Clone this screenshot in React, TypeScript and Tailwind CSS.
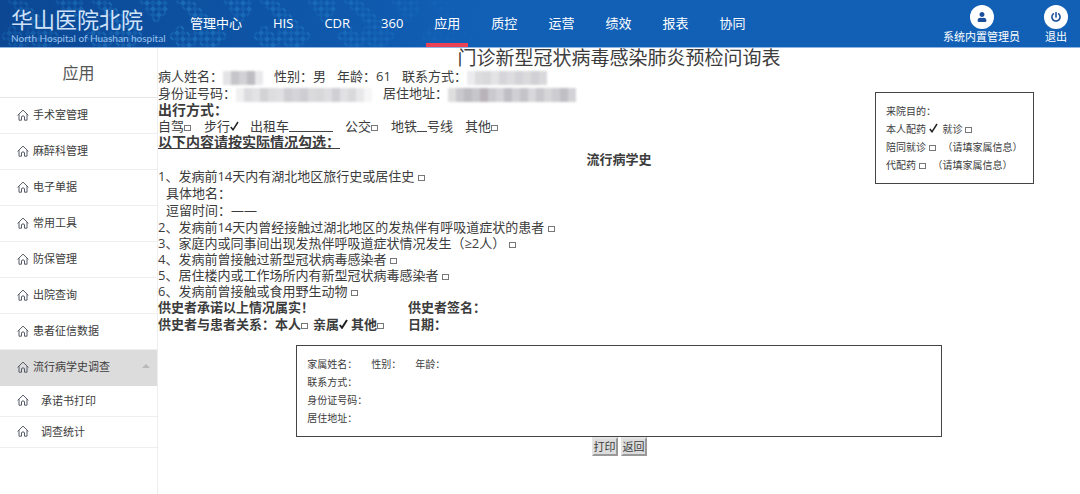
import React from 'react';
import { FaPowerOff, FaUser } from 'react-icons/fa';

interface MenuItem {
  id: string;
  label: string;
  active?: boolean;
}

interface TickProps {
  label: string;
  checked?: boolean;
  bold?: boolean;
  className?: string;
}

const navItems = ['管理中心', 'HIS', 'CDR', '360', '应用', '质控', '运营', '绩效', '报表', '协同'];

const menuItems: MenuItem[] = [
  { id: 'surgery', label: '手术室管理' },
  { id: 'anesthesia', label: '麻醉科管理' },
  { id: 'receipts', label: '电子单据' },
  { id: 'tools', label: '常用工具' },
  { id: 'prevention', label: '防保管理' },
  { id: 'discharge', label: '出院查询' },
  { id: 'credit', label: '患者征信数据' },
  { id: 'epidemic', label: '流行病学史调查', active: true },
];

const subItems: MenuItem[] = [
  { id: 'commitment', label: '承诺书打印' },
  { id: 'stats', label: '调查统计' },
];

const questions = [
  '2、发病前14天内曾经接触过湖北地区的发热伴有呼吸道症状的患者',
  '3、家庭内或同事间出现发热伴呼吸道症状情况发生（≥2人）',
  '4、发病前曾接触过新型冠状病毒感染者',
  '5、居住楼内或工作场所内有新型冠状病毒感染者',
  '6、发病前曾接触或食用野生动物',
];

// grey levels of the masked personal data, one entry per 8px block
const masks = {
  name: ['#e4e4e6', '#c6c6ca', '#d2d2d5', '#bdbdc2', '#e9e9eb'],
  phone: ['#ececee', '#dcdcdf', '#d9d9dc', '#e3e3e6', '#d6d6da', '#dddde0', '#d4d4d8', '#dadadd', '#d0d0d5', '#d9d9dc'],
  idCard: ['#f0f0f1', '#dcdcdf', '#e3e3e5', '#d3d3d6', '#dddde0', '#e0e0e2', '#cfcfd3', '#d5d5d9', '#cdcdd2', '#dadadd', '#d7d7da', '#dedee1', '#cfcfd4', '#e1e1e4', '#d9d9dc', '#e8e8ea', '#f6f6f7'],
  address: ['#dededf', '#c9c9cd', '#bcbcc1', '#c6c6cb', '#b9b2b8', '#cacace', '#d4d4d8', '#bebec4', '#d0d0d4', '#c4c4c9', '#d8d8db', '#c7c7cc', '#d6d6d9', '#cdcdd1', '#bfbfc5', '#d3d3d6'],
};

const Mask: React.FC<{ shades: string[] }> = ({ shades }) => (
  <span className="inline-flex h-[14px] align-middle blur-[1px]">
    {shades.map((shade, i) => (
      <span key={i} className="w-2" style={{ backgroundColor: shade }} />
    ))}
  </span>
);

const Tick: React.FC<TickProps> = ({ label, checked, bold, className = '' }) => (
  <label className={className}>
    {label}
    <span className="inline-grid h-2 w-2 items-end">
      <input
        type="checkbox"
        defaultChecked={checked}
        className="peer col-start-1 row-start-1 h-[6px] w-[7px] appearance-none border border-[#777] checked:border-transparent"
      />
      <svg
        viewBox="0 0 9 10"
        className="pointer-events-none invisible col-start-1 row-start-1 h-[10px] w-[9px] peer-checked:visible"
      >
        <path
          d="M0.8 6 L3 8.8 L8 1"
          fill="none"
          stroke="#222"
          strokeWidth={bold ? 2 : 1.5}
        />
      </svg>
    </span>
  </label>
);

const HomeIcon = () => (
  <svg viewBox="0 0 12 12" className="mb-[2px] h-3 w-3 shrink-0" fill="none" stroke="#555b66" strokeWidth="1">
    <path d="M0.6 6.4 L6 1.1 L11.4 6.4" />
    <path d="M2 5.2 V11.2 H4.5 V8 Q4.5 6.9 6 6.9 Q7.5 6.9 7.5 8 V11.2 H10 V5.2" />
  </svg>
);

const HeaderPattern = () => (
  <svg className="absolute inset-y-0 left-0 h-full w-[480px]" aria-hidden="true">
    <defs>
      <pattern id="diamonds" width="12" height="12" patternUnits="userSpaceOnUse">
        <path d="M3 0 L6 3 L3 6 L0 3 Z M9 6 L12 9 L9 12 L6 9 Z" fill="#2f95dc" />
        <path d="M9 0 L12 3 L9 6 L6 3 Z M3 6 L6 9 L3 12 L0 9 Z" fill="#2f95dc" opacity="0.6" />
      </pattern>
      <pattern id="clusters" width="84" height="60" patternUnits="userSpaceOnUse">
        <path d="M6 0 L24 0 L60 36 L42 54 L30 42 L18 54 L0 36 L12 24 L24 36 L30 24 Z" fill="#fff" />
        <path d="M54 0 L84 0 L84 12 L72 24 Z" fill="#fff" />
      </pattern>
      <linearGradient id="fade">
        <stop offset="0" stopColor="#fff" stopOpacity="0.25" />
        <stop offset="0.3" stopColor="#fff" stopOpacity="0.4" />
        <stop offset="0.7" stopColor="#fff" stopOpacity="0.3" />
        <stop offset="1" stopColor="#fff" stopOpacity="0" />
      </linearGradient>
      <mask id="cluster-mask">
        <rect width="480" height="60" fill="url(#clusters)" />
      </mask>
      <mask id="fade-mask">
        <rect width="480" height="60" fill="url(#fade)" />
      </mask>
    </defs>
    <g mask="url(#fade-mask)">
      <rect width="480" height="60" fill="url(#diamonds)" mask="url(#cluster-mask)" />
    </g>
  </svg>
);

const Header = () => (
  <header className="relative flex h-12 border-b border-[#8fb5e3] bg-gradient-to-r from-[#0b4793] via-[#1160b6] via-45% to-[#1160b6] text-white">
    <HeaderPattern />
    <div className="relative w-[182px] shrink-0 pt-[7px] pl-[11px] text-[#cfe2f8]">
      <div className="text-[22px] leading-6">华山医院北院</div>
      <div className="font-['Lato',sans-serif] text-[10px] leading-[14px] whitespace-nowrap text-[#9cc3ee]">
        North Hospital of Huashan hospital
      </div>
    </div>
    <nav className="relative flex gap-[15px]">
      {navItems.map((item) => (
        <a
          key={item}
          href="#"
          className={`flex items-center border-b-4 px-2 pt-[5px] text-[13px] whitespace-nowrap ${
            item === '应用' ? 'border-[#ea4254]' : 'border-transparent'
          }`}
        >
          {item}
        </a>
      ))}
    </nav>
    <div className="relative ml-auto flex gap-6 pt-[5px] pr-3 text-[11px] leading-4">
      <a href="#" className="flex flex-col items-center">
        <span className="flex h-6 w-6 items-center justify-center rounded-full bg-white text-[#1b4f9c]">
          <FaUser className="h-[10px] w-[10px]" />
        </span>
        系统内置管理员
      </a>
      <a href="#" className="flex flex-col items-center">
        <span className="flex h-6 w-6 items-center justify-center rounded-full bg-white text-[#1b4f9c]">
          <FaPowerOff className="h-[10px] w-[10px]" />
        </span>
        退出
      </a>
    </div>
  </header>
);

const Sidebar = () => (
  <aside className="w-[158px] shrink-0 border-r border-[#eee] text-[11px]">
    <h2 className="flex h-[50px] items-center justify-center border-b border-[#e6e6e6] text-base text-[#555]">应用</h2>
    <ul>
      {menuItems.map((item) => (
        <li key={item.id}>
          <a
            href="#"
            className={`flex h-9 items-center gap-1 border-b px-[17px] ${
              item.active ? 'border-[#dcdcdc] bg-[#dcdcdc]' : 'border-[#eee]'
            }`}
          >
            <HomeIcon />
            {item.label}
            {item.active && (
              <svg viewBox="0 0 8 4" className="-mr-[10px] mb-1 ml-auto h-1 w-2">
                <path d="M0 4 L4 0 L8 4 Z" fill="#b9b9b9" />
              </svg>
            )}
          </a>
        </li>
      ))}
      {subItems.map((item) => (
        <li key={item.id}>
          <a href="#" className="flex h-[31px] items-center gap-3 border-b border-[#eee] px-[17px]">
            <HomeIcon />
            {item.label}
          </a>
        </li>
      ))}
    </ul>
  </aside>
);

const VisitPurpose = () => (
  <section className="col-start-1 row-start-1 mt-[44px] mr-[5%] w-[159px] self-start justify-self-end border border-[#444] px-[10px] py-[9px] text-[10px] leading-[18px] whitespace-nowrap">
    <div>来院目的：</div>
    <div className="flex gap-[6px]">
      <Tick label="本人配药 " checked />
      <Tick label="就诊 " />
    </div>
    <div className="flex gap-[6px]">
      <Tick label="陪同就诊 " />
      <span>（请填家属信息）</span>
    </div>
    <div className="flex gap-[6px]">
      <Tick label="代配药 " />
      <span>（请填家属信息）</span>
    </div>
  </section>
);

const Questionnaire = () => (
  <form className="col-start-1 row-start-1 text-[13px] leading-[17px]">
    <h1 className="text-center text-[19px] leading-5">门诊新型冠状病毒感染肺炎预检问询表</h1>
    <div className="flex items-center gap-[11px]">
      <span>
        病人姓名：
        <Mask shades={masks.name} />
      </span>
      <span>性别：男</span>
      <span>年龄：61</span>
      <span>
        联系方式：
        <Mask shades={masks.phone} />
      </span>
    </div>
    <div className="flex items-center gap-[11px]">
      <span>
        身份证号码：
        <Mask shades={masks.idCard} />
      </span>
      <span>
        居住地址：
        <Mask shades={masks.address} />
      </span>
    </div>

    <h3 className="text-sm leading-4 font-bold">出行方式：</h3>
    <div className="flex gap-3 leading-4">
      <Tick label="自驾" />
      <Tick label="步行" checked />
      <label className="flex">
        出租车
        <input type="text" className="h-[14px] w-11 border-b border-[#444]" />
      </label>
      <Tick label="公交" />
      <label className="flex">
        地铁
        <input type="text" className="h-[14px] w-[10px] border-b border-[#444]" />
        号线
      </label>
      <Tick label="其他" />
    </div>
    <h3 className="text-sm leading-4 font-bold underline">以下内容请按实际情况勾选：</h3>
    <h3 className="text-center leading-[18px] font-bold">流行病学史</h3>

    <div>
      <Tick label="1、发病前14天内有湖北地区旅行史或居住史 " />
    </div>
    <div className="pl-2">具体地名：</div>
    <div className="pl-2">逗留时间：——</div>
    {questions.map((question) => (
      <div key={question} className="leading-4">
        <Tick label={`${question} `} />
      </div>
    ))}

    <div className="grid w-fit grid-cols-[250px_auto] font-bold">
      <span>供史者承诺以上情况属实！</span>
      <span>供史者签名：</span>
      <span className="flex">
        供史者与患者关系：
        <span className="flex gap-1">
          <Tick label="本人" />
          <Tick label="亲属" checked bold />
          <Tick label="其他" />
        </span>
      </span>
      <span>日期：</span>
    </div>

    <div className="mx-auto mt-3 w-[70%] border border-[#444] px-[10px] py-[9px] text-[10px] leading-[18px]">
      <div className="flex gap-[14px]">
        <span>家属姓名：</span>
        <span>性别：</span>
        <span>年龄：</span>
      </div>
      <div>联系方式：</div>
      <div>身份证号码：</div>
      <div>居住地址：</div>
    </div>
    <div className="flex justify-center gap-[3px] text-[11px] leading-[15px]">
      <button type="button" className="border-2 border-t-[#e4e4e4] border-r-[#999] border-b-[#999] border-l-[#e4e4e4] bg-[#dcdcdc]">
        打印
      </button>
      <button type="button" className="border-2 border-t-[#e4e4e4] border-r-[#999] border-b-[#999] border-l-[#e4e4e4] bg-[#dcdcdc]">
        返回
      </button>
    </div>
  </form>
);

export default function App() {
  return (
    <div className="flex min-h-screen flex-col bg-white font-['Open_Sans','Noto_Sans_CJK_SC',sans-serif] text-[#3c3c3c]">
      <Header />
      <div className="flex flex-1">
        <Sidebar />
        <main className="grid flex-1 content-start">
          <Questionnaire />
          <VisitPurpose />
        </main>
      </div>
    </div>
  );
}
